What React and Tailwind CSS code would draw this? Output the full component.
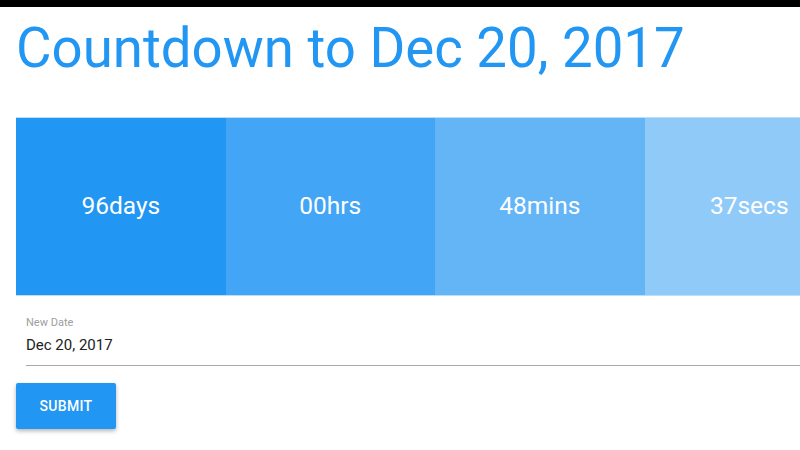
export default function App() {
  const font = { fontFamily: "Roboto, 'Liberation Sans', sans-serif" };
  const boxes = [
    { t: "96days", c: "bg-[#2196f3]" },
    { t: "00hrs", c: "bg-[#42a5f5]" },
    { t: "48mins", c: "bg-[#64b5f6]" },
    { t: "37secs", c: "bg-[#90caf9]" },
  ];
  return (
    <div className="w-[800px] h-[450px] overflow-hidden bg-white" style={font}>
      <div className="h-[7px] bg-black" />
      <div className="w-[854px] pl-4">
        <h1 className="text-[54.6px] leading-[55px] text-[#2196f3] pt-[14px] font-normal">
          Countdown to Dec 20, 2017
        </h1>
        <div className="mt-[41px] flex border-y border-[#bbdefb]">
          {boxes.map((b) => (
            <div
              key={b.t}
              className={`w-[209.5px] h-[177px] shrink-0 flex items-center justify-center text-white text-[24.5px] ${b.c}`}
            >
              {b.t}
            </div>
          ))}
        </div>
        <div className="pl-[10px] pt-[20px]">
          <div className="text-[11px] leading-[14px] text-[#9e9e9e]">New Date</div>
          <div className="text-[15px] leading-[20px] text-[#212121] mt-[5px] pb-[10px] border-b border-[#aaaaaa]">
            Dec 20, 2017
          </div>
        </div>
        <button className="mt-[17px] w-[100px] h-[46px] bg-[#2196f3] text-white text-[14px] font-medium rounded-[2px] shadow-[0_2px_4px_rgba(0,0,0,0.3)] tracking-[0.3px]">
          SUBMIT
        </button>
      </div>
    </div>
  );
}
